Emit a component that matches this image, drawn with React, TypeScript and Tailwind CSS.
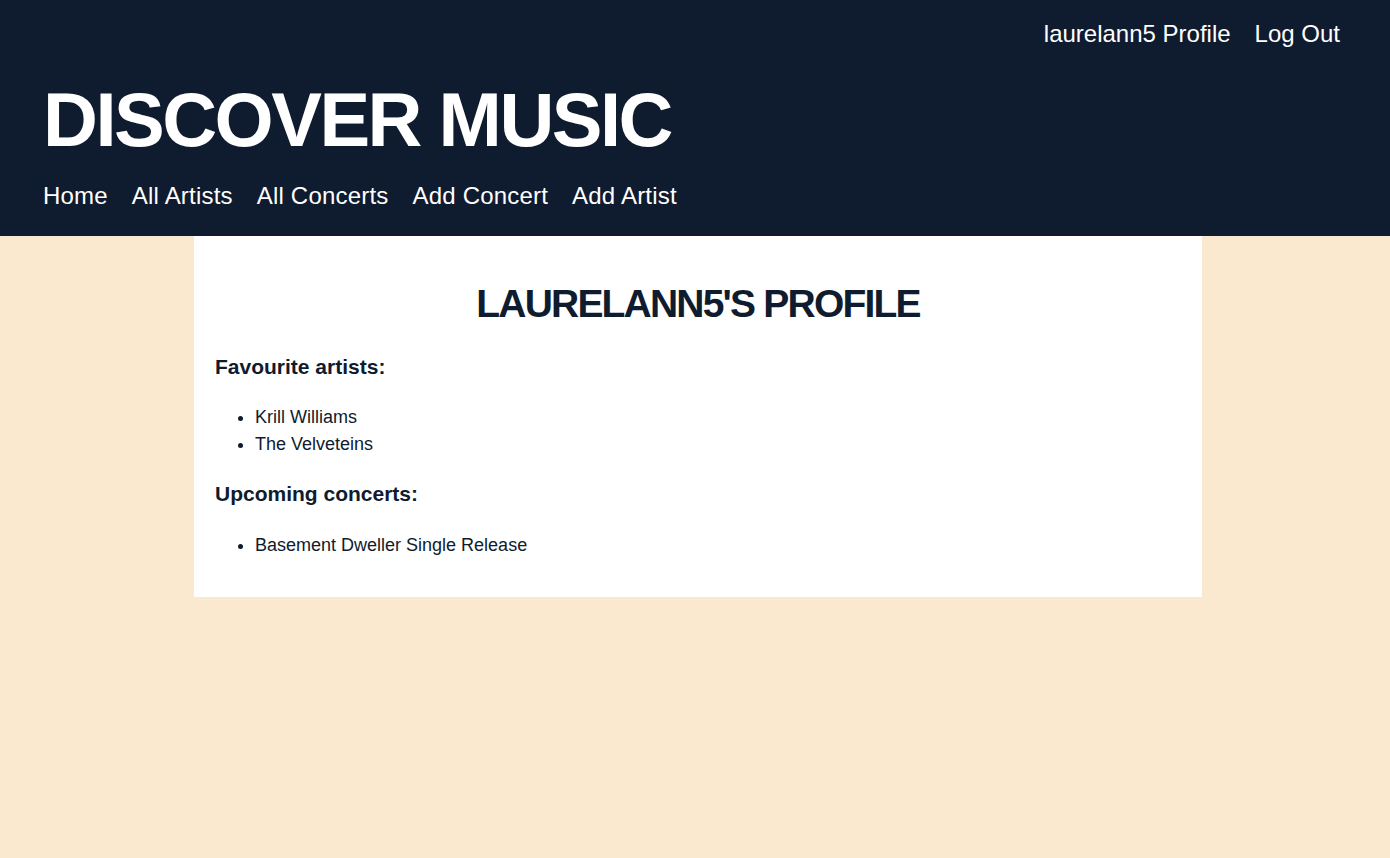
const FAVOURITES = ['Krill Williams', 'The Velveteins'];
const CONCERTS = ['Basement Dweller Single Release'];
const NAV = ['Home', 'All Artists', 'All Concerts', 'Add Concert', 'Add Artist'];

export default function App() {
  return (
    <div className="min-h-[858px] bg-[#fae9cf] font-['Liberation_Sans',Arial,sans-serif] text-[#0f1b2e]">
      <header className="bg-[#0f1b2e] text-white h-[236px] px-[43px] pt-[18px]">
        <div className="flex justify-end gap-[24px] pr-[7px] text-[24px] leading-[32px] font-light">
          <a href="#">laurelann5 Profile</a>
          <a href="#">Log Out</a>
        </div>
        <h1 className="mt-[30px] text-[76px] leading-[80px] font-bold tracking-[-2.5px]">DISCOVER MUSIC</h1>
        <nav className="mt-[20px] flex gap-[24px] text-[24px] leading-[32px] font-light tracking-[0.2px]">
          {NAV.map(n => (
            <a key={n} href="#">{n}</a>
          ))}
        </nav>
      </header>

      <main className="ml-[194px] w-[1008px] bg-white px-[21px] pt-[46px] pb-[38px]">
        <h2 className="text-center text-[39px] leading-[44px] font-bold tracking-[-1.8px]">LAURELANN5'S PROFILE</h2>
        <h3 className="mt-[28px] text-[21px] leading-[26px] font-bold">Favourite artists:</h3>
        <ul className="mt-[24px] list-disc pl-[40px] text-[18px] leading-[27px]">
          {FAVOURITES.map(a => (
            <li key={a}>{a}</li>
          ))}
        </ul>
        <h3 className="mt-[23px] text-[21px] leading-[26px] font-bold">Upcoming concerts:</h3>
        <ul className="mt-[25px] list-disc pl-[40px] text-[18px] leading-[27px]">
          {CONCERTS.map(c => (
            <li key={c}>{c}</li>
          ))}
        </ul>
      </main>
    </div>
  );
}
